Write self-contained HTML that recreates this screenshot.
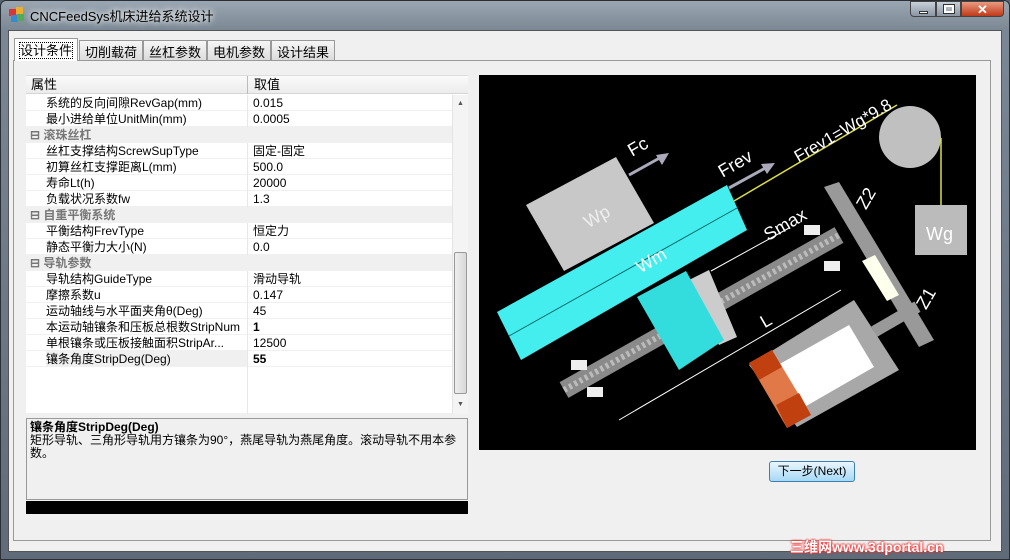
<!DOCTYPE html>
<html><head><meta charset="utf-8"><style>
*{margin:0;padding:0;box-sizing:border-box}
body{width:1010px;height:560px;overflow:hidden;background:#5a6470;font-family:"Liberation Sans","Noto Sans CJK SC",sans-serif;font-size:12px;position:relative}
.abs{position:absolute}
#frame{left:0;top:0;width:1010px;height:560px;background:linear-gradient(180deg,#9aa6b2 0,#7a8794 30px,#5f6b78 100%);border:1px solid #2a2f36;border-radius:6px 6px 0 0}
#title{left:30px;top:6px;font-size:13px;color:#000;text-shadow:0 0 6px #fff,0 0 8px #fff}
#client{left:8px;top:30px;width:994px;height:522px;background:#f0f0f0;border:1px solid #555}
.tab{top:40px;height:20px;border:1px solid #999;border-bottom:none;background:linear-gradient(#f6f6f6,#dcdcdc);font-size:13px;padding:1px 5px 0;white-space:nowrap}
#page{left:13px;top:60px;width:978px;height:481px;border:1px solid #999;background:#f0f0f0}
#grid{left:26px;top:75px;width:442px;height:338px;background:#fff;border-top:1px solid #ddd}
.row{position:absolute;left:0;width:426px;height:16px;border-bottom:1px solid #f0f0f0;font-size:12px;line-height:16px}
.row .k{position:absolute;left:20px;width:201px;height:16px;white-space:nowrap;overflow:hidden}
.row .v{position:absolute;left:221px;width:204px;white-space:nowrap;border-left:1px solid #e8e8e8;padding-left:5px}
.cat{background:#f0f0f0;color:#777;font-weight:bold}
.cat .k{left:4px}
.b{font-weight:bold}
</style></head><body>
<div id="frame" class="abs"></div>
<div class="abs" style="left:9px;top:7px;width:16px;height:16px">
<div class="abs" style="left:0;top:2px;width:7px;height:7px;background:#d33"></div>
<div class="abs" style="left:7px;top:0;width:7px;height:7px;background:#e8b030"></div>
<div class="abs" style="left:2px;top:8px;width:7px;height:7px;background:#3a8ad0"></div>
<div class="abs" style="left:8px;top:7px;width:7px;height:7px;background:#5a5"></div></div>
<div id="title" class="abs">CNCFeedSys机床进给系统设计</div>
<div class="abs" style="left:910px;top:1px;width:26px;height:16px;border:1px solid #444;border-radius:0 0 0 4px;background:linear-gradient(#c8d0d8,#8a96a2)"><div class="abs" style="left:8px;top:9px;width:9px;height:3px;background:#fff;border:1px solid #333"></div></div>
<div class="abs" style="left:936px;top:1px;width:25px;height:16px;border:1px solid #444;background:linear-gradient(#c8d0d8,#8a96a2)"><div class="abs" style="left:7px;top:3px;width:10px;height:8px;border:2px solid #fff;outline:1px solid #333"></div></div>
<div class="abs" style="left:961px;top:1px;width:43px;height:16px;border:1px solid #444;border-radius:0 0 4px 0;background:linear-gradient(#e89a80,#c03818);color:#fff;font-weight:bold;text-align:center;font-size:13px;line-height:15px">✕</div>
<div id="client" class="abs"></div>
<div id="page" class="abs"></div>
<div class="tab abs" style="left:14px;top:38px;height:23px;background:#fff;z-index:2"><span style="outline:1px dotted #000">设计条件</span></div>
<div class="tab abs" style="left:79px">切削载荷</div>
<div class="tab abs" style="left:143px">丝杠参数</div>
<div class="tab abs" style="left:207px">电机参数</div>
<div class="tab abs" style="left:271px">设计结果</div>

<div id="grid" class="abs">
<div class="abs" style="left:0;top:0;width:442px;height:18px;background:linear-gradient(#fafafa,#ececec);border-bottom:1px solid #d5d5d5;font-size:13px;line-height:18px"><span class="abs" style="left:5px">属性</span><span class="abs" style="left:221px;top:0;height:18px;border-left:1px solid #bbb;padding-left:6px">取值</span></div>
<div class="abs" style="left:0;top:19px;width:426px;height:319px">
<div class="row" style="top:0"><span class="k">系统的反向间隙RevGap(mm)</span><span class="v">0.015</span></div>
<div class="row" style="top:16px"><span class="k">最小进给单位UnitMin(mm)</span><span class="v">0.0005</span></div>
<div class="row cat" style="top:32px"><span class="k">⊟ 滚珠丝杠</span></div>
<div class="row" style="top:48px"><span class="k">丝杠支撑结构ScrewSupType</span><span class="v">固定-固定</span></div>
<div class="row" style="top:64px"><span class="k">初算丝杠支撑距离L(mm)</span><span class="v">500.0</span></div>
<div class="row" style="top:80px"><span class="k">寿命Lt(h)</span><span class="v">20000</span></div>
<div class="row" style="top:96px"><span class="k">负载状况系数fw</span><span class="v">1.3</span></div>
<div class="row cat" style="top:112px"><span class="k">⊟ 自重平衡系统</span></div>
<div class="row" style="top:128px"><span class="k">平衡结构FrevType</span><span class="v">恒定力</span></div>
<div class="row" style="top:144px"><span class="k">静态平衡力大小(N)</span><span class="v">0.0</span></div>
<div class="row cat" style="top:160px"><span class="k">⊟ 导轨参数</span></div>
<div class="row" style="top:176px"><span class="k">导轨结构GuideType</span><span class="v">滑动导轨</span></div>
<div class="row" style="top:192px"><span class="k">摩擦系数u</span><span class="v">0.147</span></div>
<div class="row" style="top:208px"><span class="k">运动轴线与水平面夹角θ(Deg)</span><span class="v">45</span></div>
<div class="row" style="top:224px"><span class="k">本运动轴镶条和压板总根数StripNum</span><span class="v b">1</span></div>
<div class="row" style="top:240px"><span class="k">单根镶条或压板接触面积StripAr...</span><span class="v">12500</span></div>
<div class="row" style="top:256px"><span class="k" style="background:#f0f0f0">镶条角度StripDeg(Deg)</span><span class="v b">55</span></div>
<div class="abs" style="left:221px;top:272px;width:1px;height:47px;background:#e8e8e8"></div>
</div>
<div class="abs" style="left:426px;top:19px;width:16px;height:319px;background:#f4f4f4;border-left:1px solid #e4e4e4">
<div class="abs" style="left:4px;top:5px;font-size:7px;color:#555">▲</div>
<div class="abs" style="left:1px;top:157px;width:13px;height:142px;background:linear-gradient(90deg,#eee,#d8d8d8);border:1px solid #999;border-radius:2px"></div>
<div class="abs" style="left:4px;top:306px;font-size:7px;color:#555">▼</div>
</div>
</div>
<div class="abs" style="left:26px;top:418px;width:442px;height:82px;border:1px solid #999;background:#f0f0f0;padding:2px 3px;line-height:13px;font-size:12px"><b>镶条角度StripDeg(Deg)</b><br>矩形导轨、三角形导轨用方镶条为90°，燕尾导轨为燕尾角度。滚动导轨不用本参数。</div>
<div class="abs" style="left:26px;top:501px;width:442px;height:13px;background:#000"></div>

<svg class="abs" style="left:479px;top:75px" width="497" height="375" viewBox="0 0 497 375">
<rect width="497" height="375" fill="#000"/>
<g font-family="Liberation Sans,sans-serif" fill="#fff">
<polygon points="47,130 137,82 175,148 85,196" fill="#c8c8c8"/>
<text x="105" y="152" font-size="18" fill="#eee" transform="rotate(-30 110 145)">Wp</text>
<line x1="150" y1="100" x2="186" y2="80" stroke="#aab" stroke-width="3"/><polygon points="190,78 177,80 183,90" fill="#aab"/>
<text x="150" y="80" font-size="18" transform="rotate(-30 155 75)">Fc</text>
<line x1="250" y1="113" x2="290" y2="91" stroke="#aab" stroke-width="3"/><polygon points="296,88 282,89 288,99" fill="#aab"/>
<text x="238" y="98" font-size="18" transform="rotate(-30 250 90)">Frev</text>
<line x1="255" y1="126" x2="418" y2="30" stroke="#dd4" stroke-width="1.5"/>
<text x="312" y="80" font-size="17" transform="rotate(-30 330 70)">Frev1=Wg*9.8</text>
<circle cx="431" cy="62" r="31" fill="#c0c0c0"/>
<line x1="462" y1="63" x2="462" y2="130" stroke="#dd4" stroke-width="1.5"/>
<rect x="436" y="130" width="52" height="50" fill="#bbb"/>
<text x="447" y="165" font-size="18">Wg</text>
<polygon points="270,290 375,225 420,295 318,352" fill="#a8a8a8"/>
<polygon points="290,295 370,250 395,292 315,338" fill="#fff"/>
<polygon points="270,288 293,275 332,340 308,353" fill="#e07848"/>
<polygon points="270,288 293,275 303,292 280,305" fill="#c04010"/>
<polygon points="297,330 320,318 332,340 308,353" fill="#c04010"/>
<rect x="395" y="248" width="50" height="12" fill="#999" transform="rotate(-30 400 255)"/>
<line x1="85" y1="315" x2="360" y2="160" stroke="#8a8a8a" stroke-width="18"/>
<line x1="85" y1="315" x2="360" y2="160" stroke="#bbb" stroke-width="6" stroke-dasharray="3 3"/>
<polygon points="210,205 230,195 258,262 240,270" fill="#ccc"/>
<polygon points="345,112 360,107 455,265 440,272" fill="#999"/>
<polygon points="383,186 396,180 420,220 408,226" fill="#ffe"/>
<polygon points="18,237 248,110 268,155 42,285" fill="#4ee"/>
<line x1="30" y1="261" x2="258" y2="133" stroke="#066" stroke-width="1"/>
<polygon points="158,222 207,196 245,265 200,295" fill="#3dd"/>
<text x="155" y="195" font-size="18" transform="rotate(-30 165 185)">Wm</text>
<text x="280" y="158" font-size="18" transform="rotate(-30 300 145)">Smax</text>
<line x1="232" y1="196" x2="310" y2="153" stroke="#fff"/>
<line x1="140" y1="345" x2="362" y2="215" stroke="#fff"/>
<text x="282" y="250" font-size="18" transform="rotate(-30 290 245)">L</text>
<text x="377" y="132" font-size="18" transform="rotate(-60 385 125)">Z2</text>
<text x="437" y="232" font-size="18" transform="rotate(-60 445 225)">Z1</text>
<rect x="325" y="150" width="16" height="10" fill="#eee"/><rect x="345" y="186" width="16" height="10" fill="#eee"/>
<rect x="92" y="285" width="16" height="10" fill="#eee"/><rect x="108" y="312" width="16" height="10" fill="#eee"/>
</g></svg>

<div class="abs" style="left:769px;top:461px;width:86px;height:21px;border:1px solid #3c7fb1;border-radius:3px;background:linear-gradient(#eaf6fd,#a7d9f5);font-size:12px;text-align:center;line-height:19px">下一步(Next)</div>
<div class="abs" style="left:790px;top:537px;font-size:14px;font-weight:bold;color:#fff;text-shadow:0 0 2px #e33,0 0 2px #e33,0 0 2px #e33">三维网www.3dportal.cn</div>
</body></html>
